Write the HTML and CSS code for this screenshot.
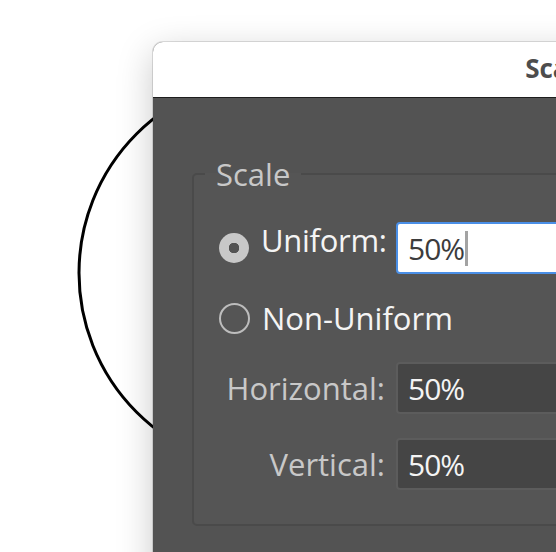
FILE: index.html
```html
<!DOCTYPE html>
<html lang="en">
<head>
    <meta charset="UTF-8">
    <meta name="viewport" content="width=device-width, initial-scale=1.0">
    <title>Scale</title>
    <link rel="stylesheet" href="styles.css">
</head>
<body>
    <!-- artwork behind the dialog -->
    <svg class="artboard" width="556" height="552" viewBox="0 0 556 552">
        <circle cx="276" cy="273" r="197" fill="none" stroke="#000" stroke-width="3" />
    </svg>

    <div class="dialog">
        <div class="dialog-title">Scale</div>
        <div class="dialog-body">
            <fieldset class="group">
                <legend>Scale</legend>
                <div class="rows">
                    <div class="row">
                        <label class="row-label is-choice">
                            <span class="radio is-checked"></span>
                            <span class="raised">Uniform:</span>
                        </label>
                        <div class="field is-focused"><span>50%</span><span class="caret"></span></div>
                    </div>

                    <div class="row row-option">
                        <label class="row-label is-choice">
                            <span class="radio"></span>
                            <span>Non-Uniform</span>
                        </label>
                    </div>

                    <div class="row">
                        <label class="row-label">Horizontal:</label>
                        <div class="field"><span>50%</span></div>
                    </div>

                    <div class="row">
                        <label class="row-label">Vertical:</label>
                        <div class="field"><span>50%</span></div>
                    </div>
                </div>
            </fieldset>
        </div>
    </div>
</body>
</html>
```

FILE: styles.css
```css
html, body {
    margin: 0;
    height: 100%;
}

body {
    position: relative;
    overflow: hidden;
    background: #fff;
    font-family: "Open Sans", "Noto Sans", sans-serif;
}

.artboard {
    position: absolute;
    left: 0;
    top: 0;
}

/* floating window */
.dialog {
    position: absolute;
    left: 153px;
    top: 42px;
    width: 811px;
    height: 540px;
    border-radius: 10px 10px 0 0;
    overflow: hidden;
    background: #535353;
    box-shadow: 0 0 0 1px rgba(0, 0, 0, 0.12), 0 10px 36px rgba(0, 0, 0, 0.22);
}

.dialog-title {
    height: 55px;
    line-height: 52px;
    background: #fff;
    border-bottom: 1px solid #1e1e1e;
    text-align: center;
    font-size: 26px;
    font-weight: bold;
    color: #4d4d4d;
}

.dialog-body {
    padding: 58px 39px 0;
}

.group {
    margin: 0;
    padding: 30px 0 34px 11px;
    border: 2px solid #4a4a4a;
    border-radius: 5px;
    background: #555;
}

.group legend {
    padding: 0 11px;
    font-size: 31px;
    line-height: 36px;
    color: #c8c8c8;
}

.rows {
    display: flex;
    flex-direction: column;
    gap: 24px;
    padding-left: 14px;
}

.row {
    display: flex;
    align-items: center;
    gap: 11px;
}

.row-label {
    width: 166px;
    flex-shrink: 0;
    display: flex;
    align-items: center;
    justify-content: flex-end;
    gap: 12px;
    font-size: 31px;
    line-height: 36px;
    color: #c8c8c8;
    white-space: nowrap;
}

/* radio rows start at the left edge */
.row-label.is-choice {
    justify-content: flex-start;
    color: #f4f4f4;
}

.row-option {
    height: 40px;
}

.row-option .row-label {
    width: auto;
}

.raised {
    padding-bottom: 16px;
    letter-spacing: -0.3px;
}

.radio {
    width: 27px;
    height: 27px;
    border: 2px solid #bdbdbd;
    border-radius: 50%;
    flex-shrink: 0;
}

.radio.is-checked {
    width: 30px;
    height: 30px;
    border: none;
    background: radial-gradient(circle, #535353 0 5px, #c8c8c8 5.5px);
}

.field {
    width: 220px;
    height: 52px;
    box-sizing: border-box;
    display: flex;
    align-items: center;
    padding-left: 10px;
    border: 2px solid #5c5c5c;
    border-radius: 4px;
    background: #454545;
    color: #f4f4f4;
    font-size: 30px;
    letter-spacing: -1px;
}

.field.is-focused {
    background: #fff;
    border-color: #4a8fe7;
    color: #3c3c3c;
}

.caret {
    width: 3px;
    height: 35px;
    margin-left: 1px;
    background: #a3a3a3;
}
```
